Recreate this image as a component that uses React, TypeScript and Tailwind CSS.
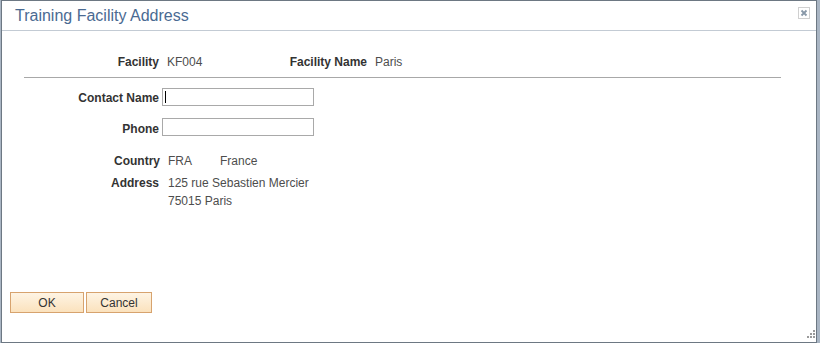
import React from "react";

const font = { fontFamily: '"Liberation Sans", Arial, sans-serif' };

function Label({ children, className = "" }: { children: React.ReactNode; className?: string }) {
  return <span className={`font-bold text-[#333] text-right ${className}`}>{children}</span>;
}

function ResizeGrip() {
  const dots = [
    [6, 0],
    [3, 3],
    [6, 3],
    [0, 6],
    [3, 6],
    [6, 6],
  ];
  return (
    <div className="absolute right-[1px] bottom-[4px] h-[8px] w-[8px]">
      {dots.map(([x, y], i) => (
        <span
          key={i}
          className="absolute h-[2px] w-[2px] bg-[#9a9a9a]"
          style={{ left: x, top: y }}
        />
      ))}
    </div>
  );
}

export default function App() {
  return (
    <div className="flex h-[343px] w-[820px] bg-[#a9b5c3] pl-[1px] pr-[3px]" style={font}>
      <div className="relative flex h-full w-full flex-col border border-[#6d7883] bg-white text-[12px] leading-4">
        <header className="flex h-[30px] shrink-0 justify-between border-b border-[#c3cbd4] pl-[13px] pr-[6px]">
          <h1 className="self-center text-[16px] leading-[18px] text-[#4a6a92]">Training Facility Address</h1>
          <button className="mt-[6px] flex h-[12px] w-[12px] items-center justify-center border border-[#d0d0d0] bg-white">
            <svg width="8" height="8" viewBox="0 0 8 8">
              <path d="M1.5 1.5 L6.5 6.5 M6.5 1.5 L1.5 6.5" stroke="#8898a8" strokeWidth="1.8" />
            </svg>
          </button>
        </header>

        <div className="flex flex-col pt-[23px]">
          <div className="flex">
            <Label className="w-[157px]">Facility</Label>
            <span className="ml-[8px] w-[117px] text-[#4d4d4d]">KF004</span>
            <Label className="w-[83px]">Facility Name</Label>
            <span className="ml-[8px] text-[#4d4d4d]">Paris</span>
          </div>

          <div className="ml-[22px] mt-[7px] h-px w-[757px] bg-[#a8a8a8]" />

          <div className="mt-[10px] flex items-center gap-[3px]">
            <Label className="w-[157px] pt-[1px]">Contact Name</Label>
            <div className="relative h-[18px] w-[152px] border border-[#a9a9a9]">
              <span className="absolute left-[2px] top-[2px] h-[12px] w-px bg-black" />
            </div>
          </div>

          <div className="mt-[11px] flex items-center gap-[3px]">
            <Label className="w-[157px] pt-[4px]">Phone</Label>
            <div className="h-[18px] w-[152px] border border-[#a9a9a9]" />
          </div>

          <div className="mt-[16px] flex">
            <Label className="w-[158px]">Country</Label>
            <span className="ml-[8px] w-[52px] text-[#4d4d4d]">FRA</span>
            <span className="text-[#4d4d4d]">France</span>
          </div>

          <div className="mt-[5px] flex leading-[18px]">
            <Label className="w-[157px]">Address</Label>
            <div className="ml-[9px] flex flex-col text-[#4d4d4d]">
              <span>125 rue Sebastien Mercier</span>
              <span>75015 Paris</span>
            </div>
          </div>
        </div>

        <footer className="mt-auto flex gap-[2px] pb-[29px] pl-[8px]">
          <button className="h-[21px] w-[74px] border border-[#d7a36e] bg-gradient-to-b from-[#fef4e4] to-[#fbe2bd] text-[12px] text-[#333]">
            OK
          </button>
          <button className="h-[21px] w-[66px] border border-[#d7a36e] bg-gradient-to-b from-[#fef4e4] to-[#fbe2bd] text-[12px] text-[#333]">
            Cancel
          </button>
        </footer>

        <ResizeGrip />
      </div>
    </div>
  );
}
